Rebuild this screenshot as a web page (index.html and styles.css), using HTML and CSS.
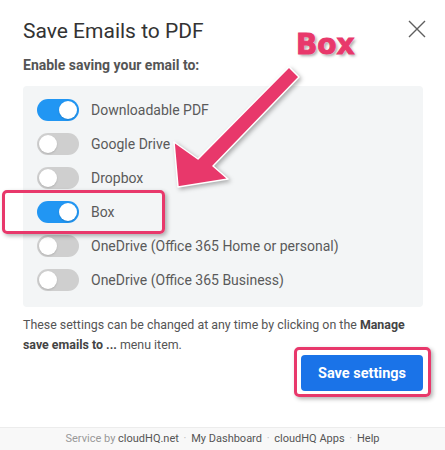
FILE: index.html
```html
<!DOCTYPE html>
<html lang="en">
<head>
    <meta charset="UTF-8">
    <meta name="viewport" content="width=device-width, initial-scale=1.0">
    <title>Save Emails to PDF</title>
    <link rel="stylesheet" href="styles.css">
</head>
<body>
    <div class="dialog">
        <div class="head">
            <h1 class="title">Save Emails to PDF</h1>
            <button class="close" aria-label="Close">
                <svg width="18" height="18" viewBox="0 0 18 18"><path d="M1 1L17 17M17 1L1 17" stroke="#5f5f5f" stroke-width="1.4" fill="none"/></svg>
            </button>
        </div>
        <p class="lead">Enable saving your email to:</p>
        <div class="panel">
            <label class="row"><span class="toggle on"></span>Downloadable PDF</label>
            <label class="row"><span class="toggle"></span>Google Drive</label>
            <label class="row"><span class="toggle"></span>Dropbox</label>
            <label class="row"><span class="toggle on"></span>Box</label>
            <label class="row"><span class="toggle"></span>OneDrive (Office 365 Home or personal)</label>
            <label class="row"><span class="toggle"></span>OneDrive (Office 365 Business)</label>
        </div>
        <p class="note">These settings can be changed at any time by clicking on the <b>Manage save emails to ...</b> menu item.</p>
        <div class="actions">
            <button class="save">Save settings</button>
        </div>
    </div>
    <div class="footer">
        <span class="muted">Service by</span> cloudHQ.net <span class="dot">·</span> My Dashboard <span class="dot">·</span> cloudHQ Apps <span class="dot">·</span> Help
    </div>

    <!-- annotations drawn over the dialog -->
    <div class="callout">Box</div>
    <svg class="arrow" width="445" height="450" viewBox="0 0 445 450">
        <polygon points="289,67 299,77 213,166 228,179 178,187 174,142 198,159" fill="#e8386b" stroke="#fff" stroke-width="1.5" stroke-linejoin="round"/>
    </svg>
    <div class="mark mark-box"></div>
    <div class="mark mark-save"></div>
</body>
</html>
```

FILE: styles.css
```css
*{
    margin: 0;
    padding: 0;
    box-sizing: border-box;
}
body{
    width: 445px;
    height: 450px;
    display: flex;
    flex-direction: column;
    font-family: Roboto, "Liberation Sans", sans-serif;
    background: #fff;
    overflow: hidden;
    position: relative;
}
.dialog{
    padding: 17px 22px 0 23px;
    flex: 1;
}
.head{
    display: flex;
    justify-content: space-between;
    align-items: flex-start;
}
.title{
    font-size: 21px;
    font-weight: 400;
    line-height: 28px;
    color: #333;
}
.close{
    border: none;
    background: none;
    margin: 3px -3px 0 0;
    width: 18px;
    height: 18px;
}
.lead{
    margin-top: 10px;
    font-size: 14px;
    font-weight: 700;
    line-height: 20px;
    color: #555;
}
.panel{
    margin-top: 11px;
    background: #f3f5f6;
    border-radius: 4px;
    padding: 7px 14px 10px;
}
.row{
    display: flex;
    align-items: center;
    gap: 12px;
    height: 34px;
    font-size: 14px;
    color: #5a5a5a;
}
.toggle{
    width: 42px;
    height: 22px;
    border-radius: 11px;
    background: #cfcfcf;
    position: relative;
    flex: none;
}
.toggle::after{
    content: "";
    position: absolute;
    top: 2px;
    left: 2px;
    width: 18px;
    height: 18px;
    border-radius: 50%;
    background: #fff;
    box-shadow: 0 1px 2px rgba(0,0,0,.15);
}
.toggle.on{
    background: #2196f3;
}
.toggle.on::after{
    left: 22px;
}
.note{
    margin-top: 8px;
    font-size: 12.4px;
    line-height: 20px;
    color: #555;
}
.note b{
    color: #444;
}
.actions{
    display: flex;
    justify-content: flex-end;
}
.save{
    width: 122px;
    height: 36px;
    border: none;
    border-radius: 4px;
    background: #1a73e8;
    color: #fff;
    font-family: Roboto, sans-serif;
    font-size: 14.5px;
    font-weight: 700;
}
.footer{
    height: 23px;
    background: #f8f8f8;
    border-top: 1px solid #ececec;
    text-align: center;
    font-size: 11px;
    line-height: 22px;
    color: #555;
}
.muted{
    color: #999;
}
.dot{
    color: #bbb;
    margin: 0 2px;
}
.callout{
    position: absolute;
    left: 296px;
    top: 28px;
    font-family: "DejaVu Sans", sans-serif;
    font-weight: 700;
    font-size: 28px;
    color: #e8386b;
    -webkit-text-stroke: 1px #e8386b;
    text-shadow: 0 0 1px #fff, 0 0 2px #fff, 2px 2px 3px rgba(0,0,0,.35);
}
.arrow{
    position: absolute;
    left: 0;
    top: 0;
    pointer-events: none;
    filter: drop-shadow(2px 2px 2px rgba(0,0,0,.3));
}
.mark{
    position: absolute;
    border: 3px solid #e8386b;
    border-radius: 5px;
    box-shadow: 2px 2px 4px rgba(0,0,0,.3);
}
.mark-box{
    left: 2px;
    top: 190px;
    width: 163px;
    height: 44px;
}
.mark-save{
    left: 294px;
    top: 347px;
    width: 137px;
    height: 50px;
}
```
